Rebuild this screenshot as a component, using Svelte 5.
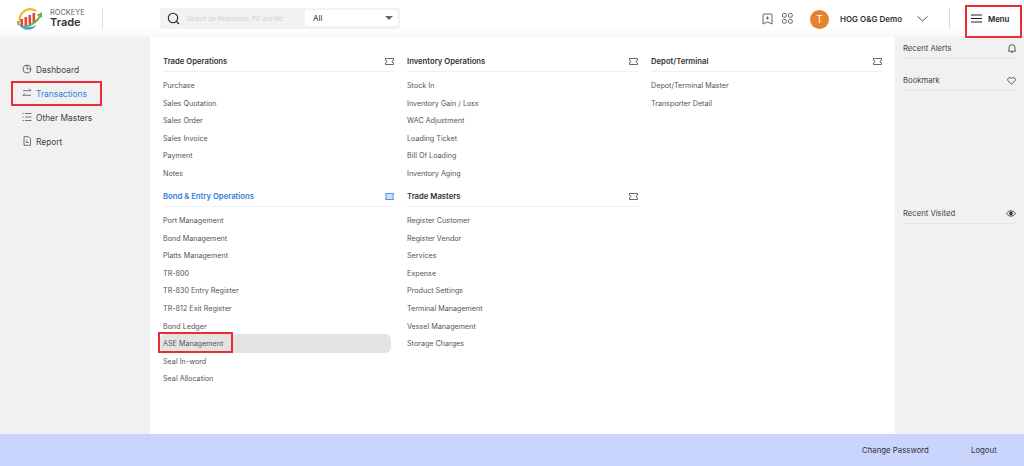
<script>
  const sidebar = [
    { label: 'Dashboard', icon: 'clock' },
    { label: 'Transactions', icon: 'swap', active: true, boxed: true },
    { label: 'Other Masters', icon: 'list' },
    { label: 'Report', icon: 'doc' }
  ];
  const columns = [
    [
      { title: 'Trade Operations', items: ['Purchase', 'Sales Quotation', 'Sales Order', 'Sales Invoice', 'Payment', 'Notes'] },
      { title: 'Bond & Entry Operations', blue: true, items: ['Port Management', 'Bond Management', 'Platts Management', 'TR-800', 'TR-830 Entry Register', 'TR-812 Exit Register', 'Bond Ledger', 'ASE Management', 'Seal In-word', 'Seal Allocation'] }
    ],
    [
      { title: 'Inventory Operations', items: ['Stock In', 'Inventory Gain / Loss', 'WAC Adjustment', 'Loading Ticket', 'Bill Of Loading', 'Inventory Aging'] },
      { title: 'Trade Masters', items: ['Register Customer', 'Register Vendor', 'Services', 'Expense', 'Product Settings', 'Terminal Management', 'Vessel Management', 'Storage Charges'] }
    ],
    [
      { title: 'Depot/Terminal', items: ['Depot/Terminal Master', 'Transporter Detail'] }
    ]
  ];
</script>

<div class="page">
  <header class="header">
    <div class="brand">
      <svg class="logo" width="27" height="24" viewBox="0 0 27 24" fill="none">
        <path d="M4 15 A10.500 10.500 0 0 1 20 4" stroke="#f2b632" stroke-width="2.200" />
        <path d="M2 14 A10.500 10.500 0 0 0 3 18" stroke="#7cbb3c" stroke-width="2.200" />
        <path d="M3 17 C6 24 16 25 21 18 C16 21 9 20 3 17Z" fill="#3ba6dc" />
        <rect x="4.500" y="12" width="2.600" height="7" fill="#e0483e" />
        <rect x="8.500" y="10" width="2.600" height="9" fill="#e0483e" />
        <rect x="12.500" y="8" width="2.600" height="11" fill="#e0483e" />
        <rect x="16.500" y="6" width="2.600" height="10" fill="#e0483e" />
        <path d="M3 19 C11 20 18 16 23 9 L20.500 8 L26 5 L26 11 L24.500 10 C20 18 11 22 3 19Z" fill="#6cb33f" />
      </svg>
      <div class="brand-text">
        <span class="brand-top">ROCKEYE</span>
        <span class="brand-name">Trade</span>
      </div>
    </div>
    <div class="vline brand-line"></div>
    <div class="search">
      <svg width="13" height="13" viewBox="0 0 13 13" fill="none" stroke="#222" stroke-width="1.100">
        <circle cx="6" cy="6" r="4.700" /><path d="M9.500 9.500 L12 12" />
      </svg>
      <span class="placeholder">Search for Requisition, PO and Mc</span>
      <div class="select">
        <span>All</span>
        <span class="caret"></span>
      </div>
    </div>
    <div class="spacer"></div>
    <svg class="tool" width="11" height="12" viewBox="0 0 11 12" fill="none" stroke="#555" stroke-width="0.900">
      <path d="M2 1 H9 A1 1 0 0 1 10 2 V11 L5.500 9 L1 11 V2 A1 1 0 0 1 2 1Z" /><path d="M5.500 3.500 V6.500 M4 5 H7" />
    </svg>
    <svg class="tool apps" width="11" height="11" viewBox="0 0 11 11" fill="none" stroke="#555" stroke-width="0.900">
      <rect x="0.500" y="0.500" width="3.700" height="3.700" rx="1" /><rect x="6.500" y="0.500" width="3.700" height="3.700" rx="1" />
      <rect x="0.500" y="6.500" width="3.700" height="3.700" rx="1" /><rect x="6.500" y="6.500" width="3.700" height="3.700" rx="1" />
    </svg>
    <div class="avatar">T</div>
    <span class="user">HOG O&amp;G Demo</span>
    <svg class="chev" width="11" height="6" viewBox="0 0 11 6" fill="none" stroke="#444" stroke-width="0.900"><path d="M0.500 0.500 L5.500 5 L10.500 0.500" /></svg>
    <div class="vline menu-line"></div>
    <div class="menu">
      <svg width="11" height="9" viewBox="0 0 11 9" stroke="#222" stroke-width="1"><path d="M0 1 H11 M0 4.500 H11 M0 8 H11" /></svg>
      <span>Menu</span>
      <div class="annot menu-box"></div>
    </div>
  </header>

  <div class="body">
    <aside class="side">
      {#each sidebar as item}
        <div class="side-item" class:active={item.active}>
          <svg width="10" height="10" viewBox="0 0 10 10" fill="none" stroke="#555" stroke-width="0.800">
            {#if item.icon === 'clock'}
              <circle cx="5" cy="5" r="4" /><path d="M5 1 V5 H9" />
            {:else if item.icon === 'swap'}
              <path d="M1 2.700 H9 M7 0.700 L9 2.700 M9 7.300 H1 M3 5.300 L1 7.300" />
            {:else if item.icon === 'list'}
              <path d="M3 1.500 H9.500 M3 5 H9.500 M3 8.500 H9.500 M0.500 1.500 H1.800 M0.500 5 H1.800 M0.500 8.500 H1.800" />
            {:else}
              <path d="M2 0.700 H6.500 L8.500 2.700 V9.300 H2Z M3.800 6.500 H6.800 M3.800 5 H5.500" />
            {/if}
          </svg>
          <span>{item.label}</span>
          {#if item.boxed}<div class="annot side-box"></div>{/if}
        </div>
      {/each}
    </aside>

    <main class="main">
      {#each columns as col}
        <div class="col">
          {#each col as sec}
            <section class="sec">
              <div class="sec-head" class:blue={sec.blue}>
                <span>{sec.title}</span>
                <svg width="9" height="7" viewBox="0 0 9 7" fill={sec.blue ? '#cfe0f7' : 'none'} stroke={sec.blue ? '#2f7fd8' : '#444'} stroke-width="0.800">
                  <path d="M0.500 0.500 H8.500 V2.200 A1.300 1.300 0 0 0 8.500 4.800 V6.500 H0.500 V4.800 A1.300 1.300 0 0 0 0.500 2.200Z" />
                </svg>
              </div>
              <ul>
                {#each sec.items as it}
                  <li class:hl={it === 'ASE Management'}>
                    {it}
                    {#if it === 'ASE Management'}<div class="annot ase-box"></div>{/if}
                  </li>
                {/each}
              </ul>
            </section>
          {/each}
        </div>
      {/each}
    </main>

    <aside class="right">
      <div class="r-row">
        <span>Recent Alerts</span>
        <svg width="8" height="9" viewBox="0 0 8 9" fill="none" stroke="#333" stroke-width="0.800"><path d="M1 6.500 V3.700 A3 3 0 0 1 7 3.700 V6.500 L7.700 7.200 H0.300Z M3 8.300 H5" /></svg>
      </div>
      <div class="r-row">
        <span>Bookmark</span>
        <svg width="9" height="8" viewBox="0 0 9 8" fill="none" stroke="#333" stroke-width="0.800"><path d="M4.500 7.300 L1 3.800 A2 2 0 0 1 4.500 1.500 A2 2 0 0 1 8 3.800Z" /></svg>
      </div>
      <div class="r-row visited">
        <span>Recent Visited</span>
        <svg width="10" height="7" viewBox="0 0 10 7" fill="none" stroke="#333" stroke-width="0.900"><path d="M0.500 3.500 C3 0 7 0 9.500 3.500 C7 7 3 7 0.500 3.500Z" /><circle cx="5" cy="3.500" r="1.400" fill="#333" /></svg>
      </div>
    </aside>
  </div>

  <footer class="footer">
    <span class="pw">Change Password</span>
    <span class="out">Logout</span>
  </footer>
</div>

<style>
  :global(body) { margin: 0; }
  .page {
    width: 1024px; height: 466px; display: flex; flex-direction: column; overflow: hidden;
    font-family: Inter, Lato, sans-serif; color: #333; background: #fff;
  }
  .header {
    height: 37px; flex: none; display: flex; align-items: center; box-sizing: border-box; padding-left: 16px;
    background: linear-gradient(#fff 75%, #f8f8f8);
  }
  .brand { display: flex; align-items: center; width: 86px; flex: none; }
  .logo { flex: none; margin-right: 7px; }
  .brand-text { display: flex; flex-direction: column; line-height: 1; }
  .brand-top { font-size: 7.400px; color: #666; }
  .brand-name { font-size: 11px; font-weight: 600; color: #333; margin-top: 1px; }
  .vline { width: 1px; height: 21px; background: #dcdcdc; flex: none; }
  .brand-line { margin-right: 57px; }
  .search {
    width: 240px; height: 21px; flex: none; background: #f2f2f2; border-radius: 3px; display: flex; align-items: center;
    box-sizing: border-box; padding-left: 7px; margin-top: -1px;
  }
  .placeholder {
    font-size: 5.900px; font-style: italic; color: #cfcfcf; margin-left: 7px; width: 117px; white-space: nowrap; overflow: hidden;
  }
  .select {
    width: 93px; height: 16px; background: #fff; border-radius: 2px; display: flex; align-items: center; justify-content: space-between;
    box-sizing: border-box; padding: 0 5px 0 8px; font-size: 8px; color: #333; margin-left: 1px;
  }
  .caret { border: 4px solid transparent; border-top: 4px solid #666; border-bottom: 0; }
  .spacer { flex: 1; }
  .tool { flex: none; }
  .apps { margin-left: 9px; }
  .avatar {
    width: 19px; height: 19px; border-radius: 50%; background: #e8822a; color: #fff; font-size: 10px; display: flex;
    align-items: center; justify-content: center; margin-left: 17px; margin-top: 1px; flex: none;
  }
  .user { font-size: 8px; font-weight: 600; margin-left: 11px; color: #333; white-space: nowrap; width: 68px; }
  .chev { margin-left: 9px; flex: none; }
  .menu-line { margin-left: 21px; margin-right: 15px; }
  .menu {
    width: 59px; flex: none; height: 100%; display: flex; align-items: center; gap: 6px; position: relative; box-sizing: border-box;
    font-size: 7.800px; font-weight: 600; color: #222; padding-left: 6px;
  }
  .annot { position: absolute; border: 2px solid #ea2c34; box-sizing: border-box; pointer-events: none; }
  .menu-box { left: 0; top: 5px; width: 57px; height: 33px; }

  .body { flex: 1; display: flex; min-height: 0; }
  .side { width: 150px; flex: none; background: #f1f1f1; padding-top: 20px; box-sizing: border-box; }
  .side-item { height: 24px; display: flex; align-items: center; padding-left: 22px; gap: 4px; font-size: 8.400px; color: #444; position: relative; }
  .side-item span { padding-top: 2px; }
  .side-item svg { flex: none; }
  .side-item.active { color: #2f7fd8; }
  .side-box { left: 11px; top: 0; width: 91px; height: 25px; }

  .main { flex: 1; display: flex; gap: 13px; padding: 17px 13px 0; box-sizing: border-box; min-width: 0; }
  .col { width: 231px; flex: none; }
  .sec-head {
    height: 18px; box-sizing: border-box; display: flex; align-items: center; justify-content: space-between; font-size: 7.700px; font-weight: 600; color: #333;
    border-bottom: 1px solid #efefef; padding-bottom: 3px; margin-bottom: 5px;
  }
  .sec-head.blue { color: #2f7fd8; }
  .sec ul { list-style: none; margin: 0 0 6.500px; padding: 0; }
  .sec li {
    height: 17.600px; line-height: 17.600px; font-size: 7.200px; color: #555; position: relative; white-space: nowrap;
  }
  .sec li.hl { background: #e3e3e3; border-radius: 6px; margin: -1px 3px 0 -3px; padding: 1px 0 0 3px; }
  .ase-box { left: -2px; top: -2px; width: 75px; height: 21px; }

  .right { width: 129px; flex: none; background: #f1f1f1; padding: 0 8px; box-sizing: border-box; }
  .r-row {
    height: 19px; padding-top: 2px; margin-bottom: 10px; border-bottom: 1px solid #e6e6e6; display: flex; align-items: center; justify-content: space-between;
    font-size: 7.700px; color: #444; box-sizing: content-box;
  }
  .visited { margin-top: 111px; }

  .footer { height: 32px; flex: none; background: #c9d5fd; display: flex; align-items: center; font-size: 7.800px; color: #333; padding-left: 862px; box-sizing: border-box; }
  .pw { width: 109px; }
</style>
